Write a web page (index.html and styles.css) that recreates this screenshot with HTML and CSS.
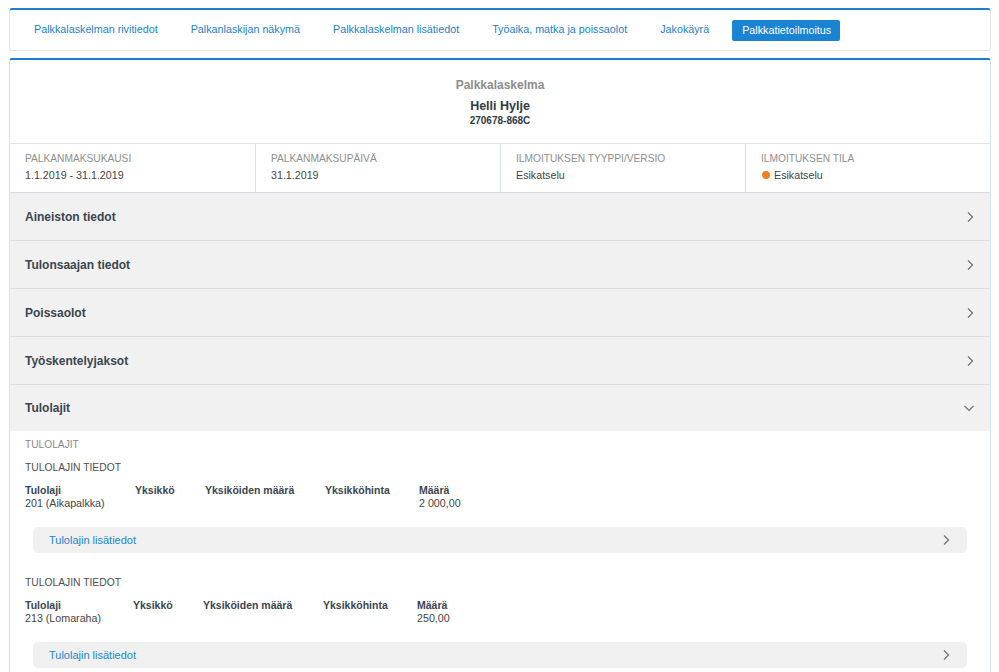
FILE: index.html
```html
<!DOCTYPE html>
<html lang="fi">
<head>
<meta charset="utf-8">
<title>Palkkatietoilmoitus</title>
<link rel="stylesheet" href="styles.css">
</head>
<body>
<div class="page">
  <nav class="tabs">
    <a class="tab">Palkkalaskelman rivitiedot</a>
    <a class="tab">Palkanlaskijan näkymä</a>
    <a class="tab">Palkkalaskelman lisätiedot</a>
    <a class="tab">Työaika, matka ja poissaolot</a>
    <a class="tab">Jakokäyrä</a>
    <a class="tab active">Palkkatietoilmoitus</a>
  </nav>

  <section class="card">
    <header class="head">
      <div class="head-title">Palkkalaskelma</div>
      <div class="head-name">Helli Hylje</div>
      <div class="head-id">270678-868C</div>
    </header>

    <div class="info">
      <div class="info-cell">
        <div class="info-label">Palkanmaksukausi</div>
        <div class="info-value">1.1.2019 - 31.1.2019</div>
      </div>
      <div class="info-cell">
        <div class="info-label">Palkanmaksupäivä</div>
        <div class="info-value">31.1.2019</div>
      </div>
      <div class="info-cell">
        <div class="info-label">Ilmoituksen tyyppi/versio</div>
        <div class="info-value">Esikatselu</div>
      </div>
      <div class="info-cell">
        <div class="info-label">Ilmoituksen tila</div>
        <div class="info-value"><span class="dot"></span>Esikatselu</div>
      </div>
    </div>

    <div class="acc">
      <span>Aineiston tiedot</span>
      <svg class="chev" width="10" height="12" viewBox="0 0 10 12"><path d="M3 1.5 L7.5 6 L3 10.5"/></svg>
    </div>
    <div class="acc">
      <span>Tulonsaajan tiedot</span>
      <svg class="chev" width="10" height="12" viewBox="0 0 10 12"><path d="M3 1.5 L7.5 6 L3 10.5"/></svg>
    </div>
    <div class="acc">
      <span>Poissaolot</span>
      <svg class="chev" width="10" height="12" viewBox="0 0 10 12"><path d="M3 1.5 L7.5 6 L3 10.5"/></svg>
    </div>
    <div class="acc">
      <span>Työskentelyjaksot</span>
      <svg class="chev" width="10" height="12" viewBox="0 0 10 12"><path d="M3 1.5 L7.5 6 L3 10.5"/></svg>
    </div>
    <div class="acc open">
      <span>Tulolajit</span>
      <svg class="chev" width="12" height="10" viewBox="0 0 12 10"><path d="M1.5 3 L6 7.5 L10.5 3"/></svg>
    </div>

    <div class="content">
      <div class="section-label">Tulolajit</div>

      <div class="item">
        <div class="item-title">Tulolajin tiedot</div>
        <div class="grid">
          <div class="th">Tulolaji</div><div class="th">Yksikkö</div><div class="th">Yksiköiden määrä</div><div class="th">Yksikköhinta</div><div class="th">Määrä</div>
          <div class="td">201 (Aikapalkka)</div><div class="td"></div><div class="td"></div><div class="td"></div><div class="td">2 000,00</div>
        </div>
        <div class="more">
          <span>Tulolajin lisätiedot</span>
          <svg class="chev" width="10" height="12" viewBox="0 0 10 12"><path d="M3 1.5 L7.5 6 L3 10.5"/></svg>
        </div>
      </div>

      <div class="item">
        <div class="item-title">Tulolajin tiedot</div>
        <div class="grid grid-b">
          <div class="th">Tulolaji</div><div class="th">Yksikkö</div><div class="th">Yksiköiden määrä</div><div class="th">Yksikköhinta</div><div class="th">Määrä</div>
          <div class="td">213 (Lomaraha)</div><div class="td"></div><div class="td"></div><div class="td"></div><div class="td">250,00</div>
        </div>
        <div class="more">
          <span>Tulolajin lisätiedot</span>
          <svg class="chev" width="10" height="12" viewBox="0 0 10 12"><path d="M3 1.5 L7.5 6 L3 10.5"/></svg>
        </div>
      </div>
    </div>
  </section>
</div>
</body>
</html>
```

FILE: styles.css
```css
* { box-sizing: border-box; }
html, body { margin: 0; padding: 0; background: #fff; }
body {
  font-family: "Liberation Sans", Arial, sans-serif;
  font-size: 10.7px;
  color: #3b4650;
  height: 672px;
  overflow: hidden;
}
.page { padding: 8px 8px 0 9px; }

.tabs {
  display: flex;
  align-items: center;
  gap: 13px;
  height: 43px;
  padding: 0 0 0 14px;
  border: 1px solid #e2e4e6;
  border-top: 2px solid #1b7fd2;
  border-radius: 3px;
  background: #fff;
  font-size: 10.75px;
}
.tab {
  display: block;
  padding: 4px 10px 5px;
  line-height: 13px;
  color: #1b7fc7;
  border-radius: 2px;
  white-space: nowrap;
}
.tab.active {
  background: #1a83d3;
  color: #fff;
  padding: 4px 10px 4px;
  height: 21px;
  line-height: 13px;
  width: 108px;
}

.card {
  margin-top: 7px;
  border: 1px solid #d5e3ef;
  border-top: 2px solid #1b7fd2;
  border-bottom: none;
  border-radius: 3px 3px 0 0;
  min-height: 620px;
}

.head {
  text-align: center;
  padding: 16px 0 15px;
  border-bottom: 1px solid #dde3e8;
}
.head-title { font-size: 12px; line-height: 18px; font-weight: bold; color: #8c8c8c; }
.head-name { font-size: 12.5px; line-height: 20px; font-weight: bold; color: #2f3a44; margin-top: 2px; }
.head-id { font-size: 10px; line-height: 14px; font-weight: bold; color: #2f3a44; margin-top: -2px; }

.info {
  display: grid;
  grid-template-columns: repeat(4, 1fr);
  border-bottom: 1px solid #d3dbe3;
}
.info-cell {
  padding: 8px 15px 9px;
}
.info-cell + .info-cell { border-left: 1px solid #d8e2ea; }
.info-label {
  text-transform: uppercase;
  color: #8e8e8e;
  line-height: 14px;
  font-size: 10.2px;
}
.info-value {
  line-height: 16px;
  margin-top: 1px;
  color: #444;
  display: flex;
  align-items: center;
}
.dot {
  width: 8px; height: 8px;
  border-radius: 50%;
  background: #f47d20;
  margin: 0 4px 0 1px;
}

.acc {
  display: flex;
  align-items: center;
  justify-content: space-between;
  height: 48px;
  padding: 0 15px;
  background: #f1f1f1;
  border-bottom: 1px solid #dcdcdc;
  font-size: 12px;
  font-weight: bold;
  color: #3a4550;
}
.acc.open { border-bottom: none; height: 46px; }
.chev { fill: none; stroke: #6f6f6f; stroke-width: 1.2; flex: none; }

.content { padding: 7px 15px 0; }
.section-label {
  text-transform: uppercase;
  color: #8a8a8a;
  line-height: 14px;
  font-size: 10.2px;
}
.item { padding-top: 9px; }
.item + .item { padding-top: 23px; }
.item-title {
  text-transform: uppercase;
  color: #4f4f4f;
  line-height: 14px;
  font-size: 10.3px;
  margin-bottom: 9px;
}
.grid {
  display: grid;
  grid-template-columns: 110px 70px 120px 94px 100px;
}
.grid-b { grid-template-columns: 108px 70px 120px 94px 100px; }
.th { font-weight: bold; color: #3a4550; line-height: 13px; font-size: 10.5px; }
.td { color: #444; line-height: 13px; }

.more {
  display: flex;
  align-items: center;
  justify-content: space-between;
  height: 26px;
  margin: 17px 8px 0 8px;
  padding: 0 16px 0 16px;
  background: #f0f0f0;
  border-radius: 5px;
  color: #1d86cf;
  font-size: 11px;
}
```
